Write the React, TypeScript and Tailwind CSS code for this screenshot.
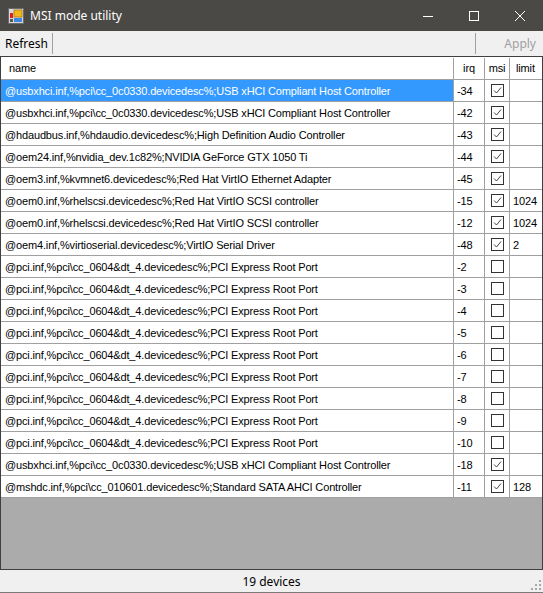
import React from "react";

const usb = "@usbxhci.inf,%pci\\cc_0c0330.devicedesc%;USB xHCI Compliant Host Controller";
const scsi = "@oem0.inf,%rhelscsi.devicedesc%;Red Hat VirtIO SCSI controller";
const pci = "@pci.inf,%pci\\cc_0604&dt_4.devicedesc%;PCI Express Root Port";

const devices = [
  { name: usb, irq: -34, msi: true, limit: "" },
  { name: usb, irq: -42, msi: true, limit: "" },
  { name: "@hdaudbus.inf,%hdaudio.devicedesc%;High Definition Audio Controller", irq: -43, msi: true, limit: "" },
  { name: "@oem24.inf,%nvidia_dev.1c82%;NVIDIA GeForce GTX 1050 Ti", irq: -44, msi: true, limit: "" },
  { name: "@oem3.inf,%kvmnet6.devicedesc%;Red Hat VirtIO Ethernet Adapter", irq: -45, msi: true, limit: "" },
  { name: scsi, irq: -15, msi: true, limit: "1024" },
  { name: scsi, irq: -12, msi: true, limit: "1024" },
  { name: "@oem4.inf,%virtioserial.devicedesc%;VirtIO Serial Driver", irq: -48, msi: true, limit: "2" },
  { name: pci, irq: -2, msi: false, limit: "" },
  { name: pci, irq: -3, msi: false, limit: "" },
  { name: pci, irq: -4, msi: false, limit: "" },
  { name: pci, irq: -5, msi: false, limit: "" },
  { name: pci, irq: -6, msi: false, limit: "" },
  { name: pci, irq: -7, msi: false, limit: "" },
  { name: pci, irq: -8, msi: false, limit: "" },
  { name: pci, irq: -9, msi: false, limit: "" },
  { name: pci, irq: -10, msi: false, limit: "" },
  { name: usb, irq: -18, msi: true, limit: "" },
  { name: "@mshdc.inf,%pci\\cc_010601.devicedesc%;Standard SATA AHCI Controller", irq: -11, msi: true, limit: "128" },
];

function AppIcon() {
  return (
    <svg width="16" height="16" viewBox="0 0 16 16">
      <rect x="0.5" y="0.5" width="15" height="15" fill="#d8d8d8" stroke="#6b6b6b" />
      <rect x="6" y="2" width="8" height="7" fill="#f2b81c" stroke="#a77a10" strokeWidth="0.8" />
      <rect x="2" y="5" width="3" height="5" fill="#e0201c" />
      <rect x="6" y="10" width="8" height="4" fill="#3f87e0" />
      <rect x="2" y="11" width="3" height="3" fill="#5a5a5a" />
    </svg>
  );
}

function Check({ on }: { on: boolean }) {
  return (
    <svg width="13" height="13" viewBox="0 0 13 13">
      <rect x="0.5" y="0.5" width="12" height="12" fill="#fff" stroke="#333" />
      {on && <path d="M3 6.5 L5.5 9 L10 3.5" fill="none" stroke="#444" strokeWidth="1" />}
    </svg>
  );
}

export default function App() {
  return (
    <div className="w-[543px] h-[593px] flex flex-col bg-[#f0f0f0] overflow-hidden" style={{ fontFamily: "'Noto Sans', sans-serif" }}>
      {/* title bar */}
      <div className="h-[31px] bg-[#4b4946] flex items-center text-white shrink-0">
        <div className="ml-[8px] mr-[6px] flex items-center"><AppIcon /></div>
        <span className="text-[12px] flex-1">MSI mode utility</span>
        <div className="w-[46px] h-full flex items-center justify-center">
          <svg width="10" height="10" viewBox="0 0 10 10"><path d="M0 5.5 H10" stroke="#fff" strokeWidth="1" /></svg>
        </div>
        <div className="w-[46px] h-full flex items-center justify-center">
          <svg width="10" height="10" viewBox="0 0 10 10"><rect x="0.5" y="0.5" width="9" height="9" fill="none" stroke="#fff" /></svg>
        </div>
        <div className="w-[46px] h-full flex items-center justify-center">
          <svg width="10" height="10" viewBox="0 0 10 10"><path d="M0 0 L10 10 M10 0 L0 10" stroke="#fff" strokeWidth="1" /></svg>
        </div>
      </div>

      {/* toolbar */}
      <div className="h-[25px] flex items-center text-[12px] shrink-0">
        <span className="pl-[5px] pr-[4px] text-black">Refresh</span>
        <div className="w-px h-[21px] bg-[#a0a0a0]" />
        <div className="flex-1" />
        <div className="w-px h-[21px] bg-[#a0a0a0]" />
        <span className="pl-[28px] pr-[7px] text-[#a0a0a0]">Apply</span>
      </div>

      {/* grid */}
      <div className="flex-1 border border-[#3f3f3f] bg-[#ababab] text-[11px] text-black tracking-[-0.15px]" style={{ fontFamily: "'Liberation Sans', Arial, sans-serif" }}>
        <div className="flex h-[23px] pt-px bg-white border-b border-[#a0a0a0]">
          <div className="w-[452px] pl-[8px] flex items-center">name</div>
          <div className="w-[31px] flex items-center justify-center border-l border-[#a0a0a0]">irq</div>
          <div className="w-[25px] flex items-center justify-center border-l border-[#a0a0a0]">msi</div>
          <div className="w-[32px] pl-[6px] flex items-center border-l border-[#a0a0a0]">limit</div>
        </div>
        {devices.map((d, i) => (
          <div key={i} className="flex h-[22px] bg-white border-b border-[#a0a0a0]">
            <div className={`w-[452px] pl-[4px] pt-px flex items-center whitespace-nowrap ${i === 0 ? "bg-[#3399ff] text-white" : ""}`}>{d.name}</div>
            <div className="w-[31px] pl-[3px] pt-px flex items-center border-l border-[#a0a0a0]">{d.irq}</div>
            <div className="w-[25px] flex items-center justify-center border-l border-[#a0a0a0]"><Check on={d.msi} /></div>
            <div className="w-[32px] pl-[3px] pt-px flex items-center border-l border-[#a0a0a0]">{d.limit}</div>
          </div>
        ))}
      </div>

      {/* status bar */}
      <div className="h-[23px] relative flex items-center justify-center text-[12px] text-black shrink-0 border-b border-[#7a7a7a]">
        <span className="pt-px">19 devices</span>
        <svg className="absolute right-[2px] bottom-[2px]" width="10" height="10" viewBox="0 0 10 10" fill="#a8a8a8">
          <rect x="8" y="0" width="2" height="2" />
          <rect x="4" y="4" width="2" height="2" />
          <rect x="8" y="4" width="2" height="2" />
          <rect x="0" y="8" width="2" height="2" />
          <rect x="4" y="8" width="2" height="2" />
          <rect x="8" y="8" width="2" height="2" />
        </svg>
      </div>
    </div>
  );
}
